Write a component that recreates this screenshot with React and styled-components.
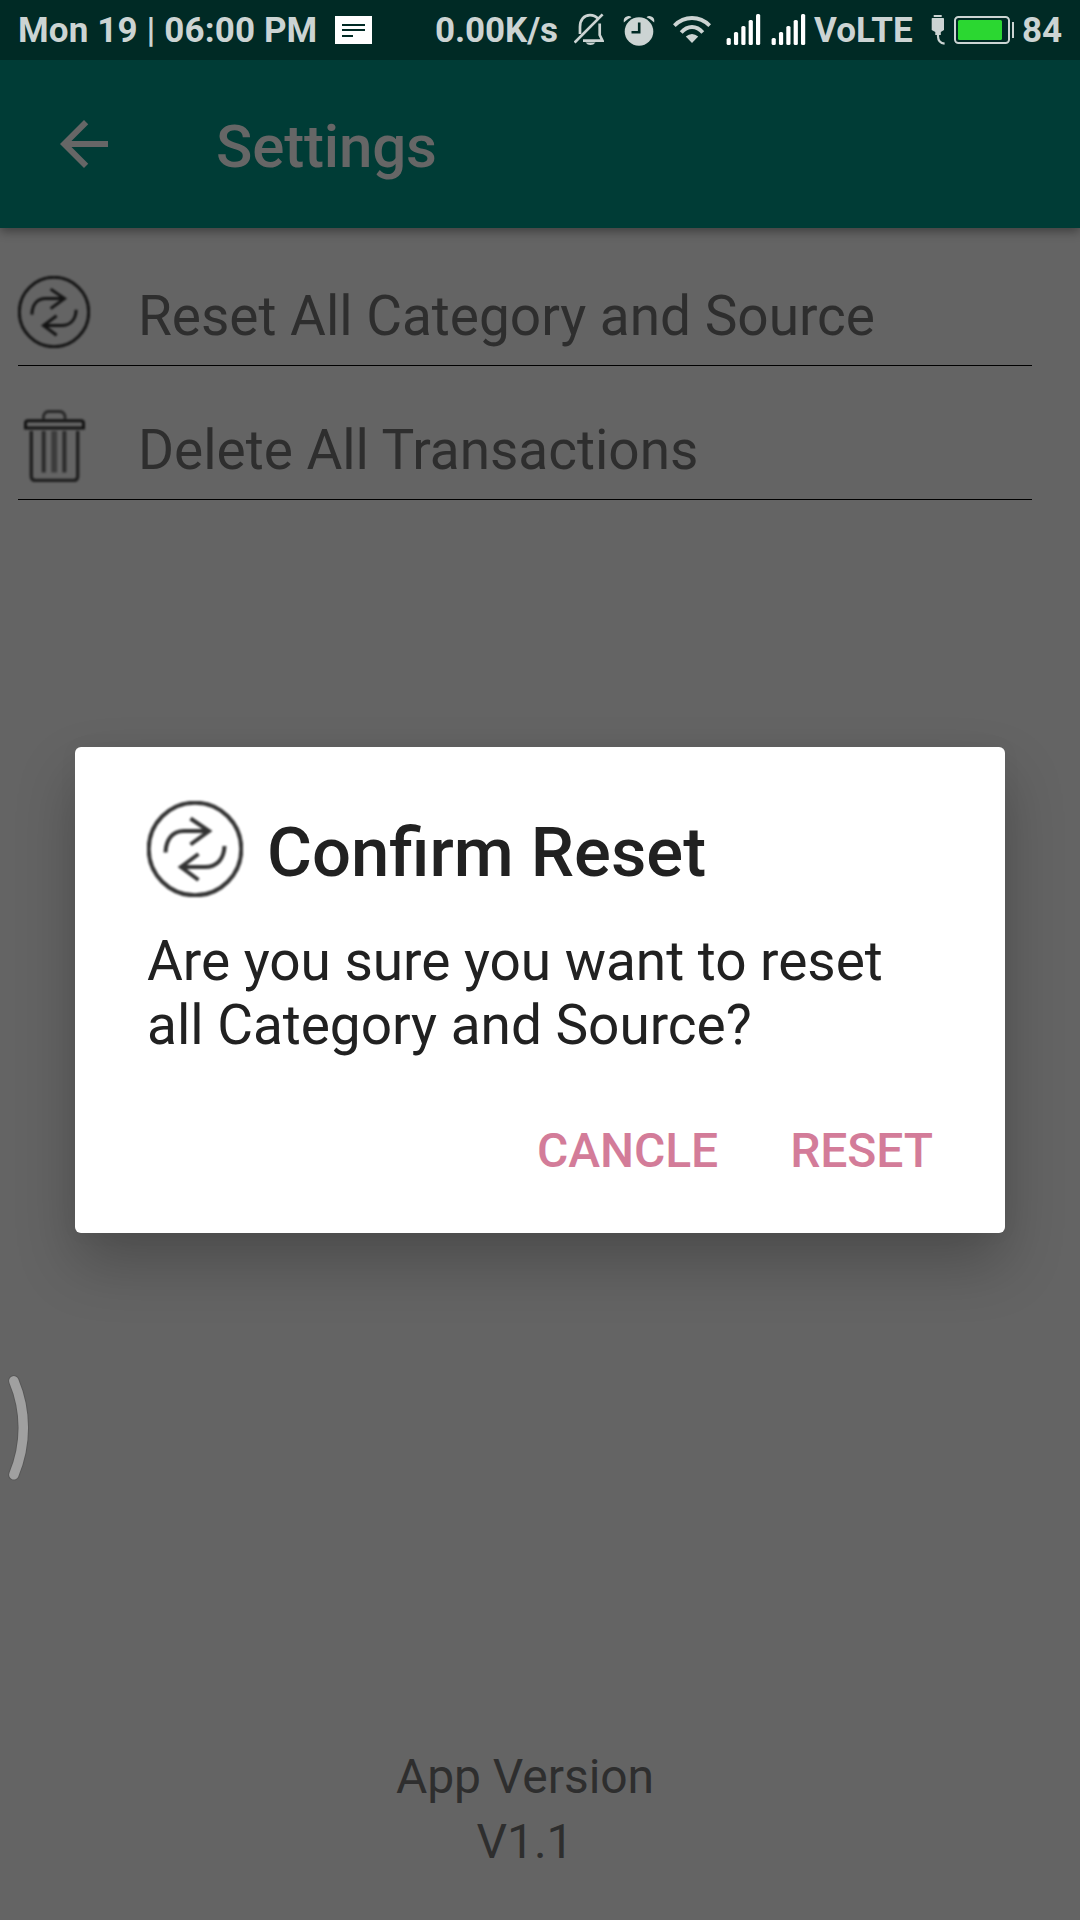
import React from "react";
import styled, { createGlobalStyle } from "styled-components";

const GlobalStyle = createGlobalStyle`
  * { box-sizing: border-box; }
  body { margin: 0; background: #646464; }
`;

const Screen = styled.div`
  position: relative;
  width: 1080px;
  height: 1920px;
  display: flex;
  flex-direction: column;
  overflow: hidden;
  background: #646464;
  font-family: Roboto, "Liberation Sans", sans-serif;
`;

const StatusBar = styled.header`
  height: 60px;
  flex: none;
  display: flex;
  align-items: center;
  justify-content: space-between;
  padding: 0 18px;
  background: #002a25;
  z-index: 1;
`;

const StatusGroup = styled.div`
  display: flex;
  align-items: center;
  height: 60px;
`;

const StatusText = styled.span`
  width: ${(p) => p.$width}px;
  height: 60px;
  margin-left: ${(p) => p.$gap || 0}px;
  padding-top: 1px;
  color: #ccd4d3;
  font-size: 35px;
  font-weight: 700;
  letter-spacing: ${(p) => p.$tracking || 0}px;
  line-height: 60px;
  white-space: nowrap;
`;

const StatusIcon = styled.svg`
  flex: none;
  display: block;
  width: ${(p) => p.$width}px;
  height: 60px;
  margin-left: ${(p) => p.$gap}px;
`;

const AppBar = styled.div`
  height: 168px;
  flex: none;
  display: flex;
  align-items: center;
  padding-left: 48px;
  background: #003c36;
  box-shadow: 0 3px 10px rgba(0, 0, 0, 0.4);
`;

const BackIcon = styled.svg`
  width: 72px;
  height: 72px;
  fill: #666666;
`;

const AppTitle = styled.h1`
  margin: 5px 0 0 96px;
  color: #666666;
  font-size: 60px;
  font-weight: 500;
  letter-spacing: -0.15px;
  line-height: 70px;
`;

const SettingsList = styled.main`
  flex: 1;
  display: flex;
  flex-direction: column;
  gap: 44px;
  padding: 48px 48px 0 18px;
`;

const SettingRow = styled.div`
  height: 90px;
  display: flex;
  align-items: flex-start;
  gap: 48px;
  border-bottom: 1px solid #000;
`;

const SettingLabel = styled.span`
  color: #2e2e2e;
  font-size: 55px;
  letter-spacing: -0.03px;
  line-height: 81px;
  white-space: nowrap;
`;

const LineIcon = styled.svg`
  flex: none;
  display: block;
  width: ${(p) => p.$size}px;
  height: ${(p) => p.$size}px;
  fill: none;
  stroke: #000;
  opacity: 0.8;
  filter: blur(1px);
`;

const Version = styled.footer`
  padding: 0 30px 46px 0;
  color: #2e2e2e;
  font-size: 48px;
  letter-spacing: -0.05px;
  line-height: 65px;
  text-align: center;
`;

const DialogLayer = styled.div`
  position: absolute;
  inset: 60px 0 0;
  display: flex;
  align-items: center;
  justify-content: center;
`;

const Dialog = styled.section`
  width: 930px;
  height: 486px;
  padding: 54px 72px 0;
  border-radius: 6px;
  background: #fff;
  box-shadow: 0 30px 60px rgba(0, 0, 0, 0.24), 0 0 20px rgba(0, 0, 0, 0.04);
`;

const DialogHeader = styled.div`
  height: 96px;
  display: flex;
  align-items: flex-start;
  gap: 24px;
`;

const DialogTitle = styled.h2`
  margin: 0;
  color: #212121;
  font-size: 68.8px;
  font-weight: 500;
  line-height: 103px;
`;

const Message = styled.p`
  margin: 32px 0 66px;
  color: #212121;
  font-size: 55px;
  letter-spacing: -0.04px;
  line-height: 64px;
`;

const Actions = styled.div`
  display: flex;
  justify-content: flex-end;
  gap: 72px;
`;

const ActionButton = styled.button`
  padding: 0;
  border: 0;
  background: none;
  color: #d37c99;
  font-family: inherit;
  font-size: 48px;
  font-weight: 500;
  letter-spacing: -0.08px;
  line-height: 56px;
`;

const EdgeHandle = styled.svg`
  position: absolute;
  left: 0;
  top: 1370px;
  width: 40px;
  height: 116px;
  fill: none;
  stroke-linecap: round;
`;

const TINT = "#ccd4d3";
const BAR_HEIGHTS = [7, 13, 19, 25, 31];

function Signal({ gap }) {
  return (
    <StatusIcon $width={35} $gap={gap} viewBox="0 0 35 60" fill="#fff">
      {BAR_HEIGHTS.map((h, i) => (
        <rect key={h} x={0.6 + i * 7.35} y={45 - h} width="4.2" height={h} rx="1.5" />
      ))}
    </StatusIcon>
  );
}

function ResetIcon({ size }) {
  return (
    <LineIcon $size={size} viewBox="0 0 96 96" strokeWidth="4">
      <circle cx="48" cy="48" r="46.3" />
      <path d="M18.5 51.5C19 39 25 30 37 30H61" />
      <path d="M43.5 17.5L62 30L43.5 43.5" />
      <path d="M77.5 45C77 58 70 66 58 66H35" />
      <path d="M51.5 53L34 66L51.5 79" />
    </LineIcon>
  );
}

function TrashIcon() {
  return (
    <LineIcon $size={72} viewBox="0 0 72 72">
      <path d="M25.5 9V6Q26.5 1.5 31 1.5H41Q46 1.5 47 6V9" strokeWidth="2.8" opacity="0.75" />
      <path d="M7.5 18V13Q7.5 10.7 10 10.7H63Q65.5 10.7 65.5 13V18Z" strokeWidth="3" />
      <path d="M13.3 21V66Q13.3 70.5 17.5 70.5H55.5Q59.7 70.5 59.7 66V21" strokeWidth="3.4" opacity="0.85" />
      <path d="M25.7 21V62.5M46.4 21V62.5" strokeWidth="4" opacity="0.7" />
      <path d="M36.2 21V62.5" strokeWidth="5.8" opacity="0.5" />
    </LineIcon>
  );
}

export default function App() {
  return (
    <Screen>
      <GlobalStyle />
      <StatusBar>
        <StatusGroup>
          <StatusText $width={300} $tracking={0.13}>Mon 19 | 06:00 PM</StatusText>
          <StatusIcon $width={37} $gap={17} viewBox="0 0 37 60">
            <rect y="16" width="37" height="28" fill="#fff" />
            <path d="M7 25H30M7 30H30M7 36H18" stroke="#002a25" strokeWidth="2" />
          </StatusIcon>
        </StatusGroup>
        <StatusGroup>
          <StatusText $width={124} $tracking={-0.1}>0.00K/s</StatusText>
          <StatusIcon $width={30} $gap={15} viewBox="0 0 30 60" fill="none" stroke={TINT} strokeWidth="2.7">
            <path d="M6 34V27C6 20 10 15.2 16 15.2C19.5 15.2 22 16.4 24 18.6" />
            <path d="M25.7 23.5V35L28.5 40.7H9" />
            <path d="M0.6 42.6L28.6 14.4" />
            <path d="M11.5 42.5H21.5Q19.5 45 16.5 45T11.5 42.5Z" fill={TINT} stroke="none" />
          </StatusIcon>
          <StatusIcon $width={32} $gap={19} viewBox="0 0 32 60">
            <path d="M0.8 22.5Q0 17 4.5 16.2Q7 15.8 8.5 17.2Q3.8 19 0.8 22.5ZM31.2 22.5Q32 17 27.5 16.2Q25 15.8 23.5 17.2Q28.2 19 31.2 22.5Z" fill={TINT} />
            <circle cx="16" cy="31.5" r="14.3" fill={TINT} />
            <path d="M16.2 22.5V32.2H8.5" fill="none" stroke="#002a25" strokeWidth="2.6" />
          </StatusIcon>
          <StatusIcon $width={38} $gap={18} viewBox="0 0 38 60" fill="none" stroke={TINT}>
            <path d="M1.3 25.6Q9 18 19 18T36.7 25.6" strokeWidth="3.8" />
            <path d="M8.2 32.4Q13 27 19 27T29.8 32.4" strokeWidth="3.8" />
            <path d="M12.8 36.6Q19 31.2 25.2 36.6L19 43Z" fill={TINT} stroke="none" />
          </StatusIcon>
          <Signal gap={15} />
          <Signal gap={10} />
          <StatusText $width={99} $gap={8} $tracking={0.1}>VoLTE</StatusText>
          <StatusIcon $width={14} $gap={18} viewBox="0 0 14 60" fill={TINT}>
            <rect x="2.7" y="15" width="8" height="2" />
            <path d="M0.7 18.5Q0.7 18 1.5 18H12.2Q13 18 13 18.8V30L9.8 32V35H4.3V32L0.7 30Z" />
            <path d="M7 34V36.5Q7.2 43 13.6 43.6" fill="none" stroke={TINT} strokeWidth="2.2" />
          </StatusIcon>
          <StatusIcon $width={60} $gap={9} viewBox="0 0 60 60">
            <rect x="1" y="17" width="54" height="26" rx="3.5" fill="none" stroke={TINT} strokeWidth="2" />
            <rect x="4" y="20" width="44" height="20" rx="1.5" fill="#2bd731" />
            <rect x="58" y="22" width="2" height="16" fill={TINT} />
          </StatusIcon>
          <StatusText $width={40} $gap={8}>84</StatusText>
        </StatusGroup>
      </StatusBar>

      <AppBar>
        <BackIcon viewBox="0 0 24 24">
          <path d="M20 11H7.83l5.59-5.59L12 4l-8 8 8 8 1.41-1.41L7.83 13H20v-2z" />
        </BackIcon>
        <AppTitle>Settings</AppTitle>
      </AppBar>

      <SettingsList>
        <SettingRow>
          <ResetIcon size={72} />
          <SettingLabel>Reset All Category and Source</SettingLabel>
        </SettingRow>
        <SettingRow>
          <TrashIcon />
          <SettingLabel>Delete All Transactions</SettingLabel>
        </SettingRow>
      </SettingsList>

      <Version>
        App Version
        <br />
        V1.1
      </Version>

      <DialogLayer>
        <Dialog role="dialog">
          <DialogHeader>
            <ResetIcon size={96} />
            <DialogTitle>Confirm Reset</DialogTitle>
          </DialogHeader>
          <Message>Are you sure you want to reset all Category and Source?</Message>
          <Actions>
            <ActionButton>CANCLE</ActionButton>
            <ActionButton>RESET</ActionButton>
          </Actions>
        </Dialog>
      </DialogLayer>

      <EdgeHandle viewBox="0 0 40 116">
        <path d="M13.8 10.8A121 121 0 0 1 13.8 104.8" stroke="#585858" strokeWidth="11.5" />
        <path d="M13.8 10.8A121 121 0 0 1 13.8 104.8" stroke="#a0a0a0" strokeWidth="9.5" />
      </EdgeHandle>
    </Screen>
  );
}
